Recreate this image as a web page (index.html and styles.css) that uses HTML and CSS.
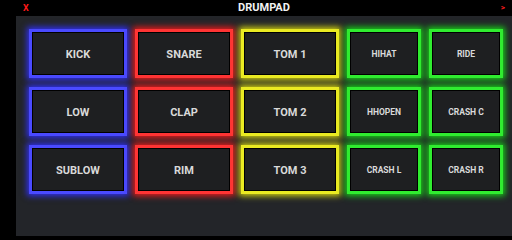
FILE: index.html
```html
<!DOCTYPE html>
<html>
<head>
<meta charset="utf-8">
<link rel="stylesheet" href="styles.css">
</head>
<body>
<div class="app">
  <div class="strip"></div>
  <div class="main">
    <div class="header">
      <span class="close">X</span>
      <span class="title">DRUMPAD</span>
      <span class="next">&gt;</span>
    </div>
    <div class="content">
      <div class="grid">
        <div class="pad blue big">KICK</div>
        <div class="pad red big">SNARE</div>
        <div class="pad yellow big">TOM 1</div>
        <div class="pad green small">HIHAT</div>
        <div class="pad green small">RIDE</div>
        <div class="pad blue big">LOW</div>
        <div class="pad red big">CLAP</div>
        <div class="pad yellow big">TOM 2</div>
        <div class="pad green small">HHOPEN</div>
        <div class="pad green small">CRASH C</div>
        <div class="pad blue big">SUBLOW</div>
        <div class="pad red big">RIM</div>
        <div class="pad yellow big">TOM 3</div>
        <div class="pad green small">CRASH L</div>
        <div class="pad green small">CRASH R</div>
      </div>
    </div>
  </div>
</div>
</body>
</html>
```
FILE: styles.css
```css
html, body {
  margin: 0;
  padding: 0;
  background: #000;
  width: 512px;
  height: 236px;
  overflow: hidden;
  font-family: Roboto, "Liberation Sans", sans-serif;
}
.app {
  display: flex;
  width: 512px;
  height: 236px;
}
.strip {
  width: 16px;
  flex: none;
  background: #000;
}
.main {
  flex: 1;
  display: flex;
  flex-direction: column;
}
.header {
  height: 16px;
  flex: none;
  background: #000;
  display: flex;
  align-items: center;
  justify-content: space-between;
  padding: 0 7px;
}
.close {
  color: #ff1a1a;
  font-weight: 700;
  font-size: 9px;
  line-height: 16px;
  width: 20px;
}
.title {
  color: #f2f2f2;
  font-weight: 700;
  font-size: 11px;
  line-height: 16px;
}
.next {
  color: #ff1a1a;
  font-weight: 700;
  font-size: 8px;
  line-height: 16px;
  width: 20px;
  text-align: right;
}
.content {
  flex: 1;
  background: #232529;
  padding: 13px 0 0 13px;
}
.grid {
  display: grid;
  grid-template-columns: 98px 98px 98px 74px 74px;
  grid-template-rows: 49px 49px 49px;
  column-gap: 8px;
  row-gap: 9px;
}
.pad {
  box-sizing: border-box;
  border: 3px solid;
  background: #1e1f21;
  display: flex;
  align-items: center;
  justify-content: center;
  color: #d9d9d9;
  font-weight: 700;
  padding-top: 1px;
}
.big { font-size: 11px; }
.small { font-size: 8.5px; }
.blue {
  border-color: #4a4aff;
  box-shadow: 0 0 6px 2px #3030f0, inset 0 0 0 1px #000;
}
.red {
  border-color: #ff3434;
  box-shadow: 0 0 6px 2px #e81c1c, inset 0 0 0 1px #000;
}
.yellow {
  border-color: #eaea22;
  box-shadow: 0 0 6px 2px #d0d010, inset 0 0 0 1px #000;
}
.green {
  border-color: #30ec30;
  box-shadow: 0 0 6px 2px #18d018, inset 0 0 0 1px #000;
}
```
